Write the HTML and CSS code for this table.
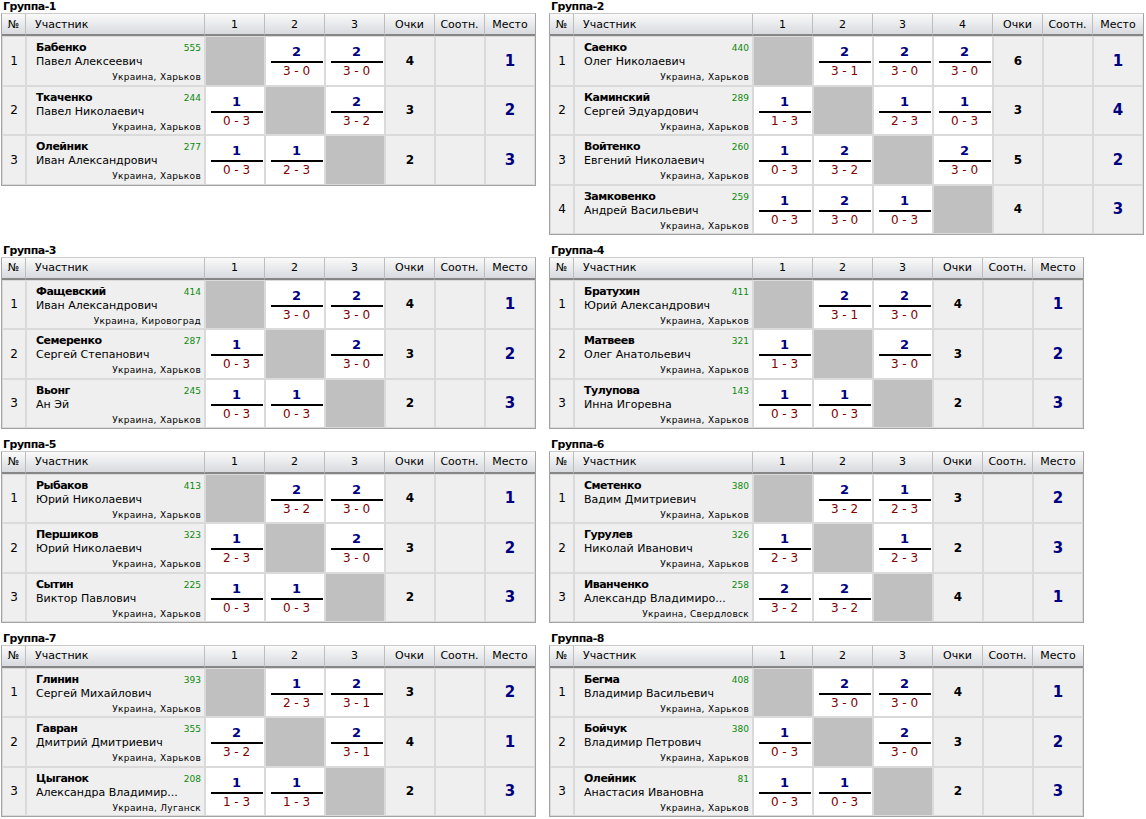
FILE: index.html
```html
<!DOCTYPE html>
<html lang="ru">
<head>
<meta charset="utf-8">
<title>Группы</title>
<link rel="stylesheet" href="styles.css">
</head>
<body>
<div class="page">

<section class="grp">
<div class="title">Группа-1</div>
<table class="t3">
<colgroup><col class="cn"><col class="cp"><col class="cs"><col class="cs"><col class="cs"><col class="co"><col class="co"><col class="co"></colgroup>
<thead><tr><th>№</th><th class="hp">Участник</th><th>1</th><th>2</th><th>3</th><th>Очки</th><th>Соотн.</th><th>Место</th></tr></thead>
<tbody>
<tr><td class="num">1</td><td class="pl"><div class="l1"><b>Бабенко</b><i>555</i></div><div class="fn">Павел Алексеевич</div><div class="loc">Украина, Харьков</div></td><td class="x"></td><td class="sc"><div class="r"><b>2</b><span>3 - 0</span></div></td><td class="sc"><div class="r"><b>2</b><span>3 - 0</span></div></td><td class="pts">4</td><td></td><td class="pos">1</td></tr>
<tr><td class="num">2</td><td class="pl"><div class="l1"><b>Ткаченко</b><i>244</i></div><div class="fn">Павел Николаевич</div><div class="loc">Украина, Харьков</div></td><td class="sc"><div class="r"><b>1</b><span>0 - 3</span></div></td><td class="x"></td><td class="sc"><div class="r"><b>2</b><span>3 - 2</span></div></td><td class="pts">3</td><td></td><td class="pos">2</td></tr>
<tr><td class="num">3</td><td class="pl"><div class="l1"><b>Олейник</b><i>277</i></div><div class="fn">Иван Александрович</div><div class="loc">Украина, Харьков</div></td><td class="sc"><div class="r"><b>1</b><span>0 - 3</span></div></td><td class="sc"><div class="r"><b>1</b><span>2 - 3</span></div></td><td class="x"></td><td class="pts">2</td><td></td><td class="pos">3</td></tr>
</tbody>
</table>
</section>

<section class="grp">
<div class="title">Группа-2</div>
<table class="t4">
<colgroup><col class="cn"><col class="cp"><col class="cs"><col class="cs"><col class="cs"><col class="cs"><col class="co"><col class="co"><col class="co"></colgroup>
<thead><tr><th>№</th><th class="hp">Участник</th><th>1</th><th>2</th><th>3</th><th>4</th><th>Очки</th><th>Соотн.</th><th>Место</th></tr></thead>
<tbody>
<tr><td class="num">1</td><td class="pl"><div class="l1"><b>Саенко</b><i>440</i></div><div class="fn">Олег Николаевич</div><div class="loc">Украина, Харьков</div></td><td class="x"></td><td class="sc"><div class="r"><b>2</b><span>3 - 1</span></div></td><td class="sc"><div class="r"><b>2</b><span>3 - 0</span></div></td><td class="sc"><div class="r"><b>2</b><span>3 - 0</span></div></td><td class="pts">6</td><td></td><td class="pos">1</td></tr>
<tr><td class="num">2</td><td class="pl"><div class="l1"><b>Каминский</b><i>289</i></div><div class="fn">Сергей Эдуардович</div><div class="loc">Украина, Харьков</div></td><td class="sc"><div class="r"><b>1</b><span>1 - 3</span></div></td><td class="x"></td><td class="sc"><div class="r"><b>1</b><span>2 - 3</span></div></td><td class="sc"><div class="r"><b>1</b><span>0 - 3</span></div></td><td class="pts">3</td><td></td><td class="pos">4</td></tr>
<tr><td class="num">3</td><td class="pl"><div class="l1"><b>Войтенко</b><i>260</i></div><div class="fn">Евгений Николаевич</div><div class="loc">Украина, Харьков</div></td><td class="sc"><div class="r"><b>1</b><span>0 - 3</span></div></td><td class="sc"><div class="r"><b>2</b><span>3 - 2</span></div></td><td class="x"></td><td class="sc"><div class="r"><b>2</b><span>3 - 0</span></div></td><td class="pts">5</td><td></td><td class="pos">2</td></tr>
<tr><td class="num">4</td><td class="pl"><div class="l1"><b>Замковенко</b><i>259</i></div><div class="fn">Андрей Васильевич</div><div class="loc">Украина, Харьков</div></td><td class="sc"><div class="r"><b>1</b><span>0 - 3</span></div></td><td class="sc"><div class="r"><b>2</b><span>3 - 0</span></div></td><td class="sc"><div class="r"><b>1</b><span>0 - 3</span></div></td><td class="x"></td><td class="pts">4</td><td></td><td class="pos">3</td></tr>
</tbody>
</table>
</section>

<section class="grp">
<div class="title">Группа-3</div>
<table class="t3">
<colgroup><col class="cn"><col class="cp"><col class="cs"><col class="cs"><col class="cs"><col class="co"><col class="co"><col class="co"></colgroup>
<thead><tr><th>№</th><th class="hp">Участник</th><th>1</th><th>2</th><th>3</th><th>Очки</th><th>Соотн.</th><th>Место</th></tr></thead>
<tbody>
<tr><td class="num">1</td><td class="pl"><div class="l1"><b>Фащевский</b><i>414</i></div><div class="fn">Иван Александрович</div><div class="loc">Украина, Кировоград</div></td><td class="x"></td><td class="sc"><div class="r"><b>2</b><span>3 - 0</span></div></td><td class="sc"><div class="r"><b>2</b><span>3 - 0</span></div></td><td class="pts">4</td><td></td><td class="pos">1</td></tr>
<tr><td class="num">2</td><td class="pl"><div class="l1"><b>Семеренко</b><i>287</i></div><div class="fn">Сергей Степанович</div><div class="loc">Украина, Харьков</div></td><td class="sc"><div class="r"><b>1</b><span>0 - 3</span></div></td><td class="x"></td><td class="sc"><div class="r"><b>2</b><span>3 - 0</span></div></td><td class="pts">3</td><td></td><td class="pos">2</td></tr>
<tr><td class="num">3</td><td class="pl"><div class="l1"><b>Вьонг</b><i>245</i></div><div class="fn">Ан Эй</div><div class="loc">Украина, Харьков</div></td><td class="sc"><div class="r"><b>1</b><span>0 - 3</span></div></td><td class="sc"><div class="r"><b>1</b><span>0 - 3</span></div></td><td class="x"></td><td class="pts">2</td><td></td><td class="pos">3</td></tr>
</tbody>
</table>
</section>

<section class="grp">
<div class="title">Группа-4</div>
<table class="t3">
<colgroup><col class="cn"><col class="cp"><col class="cs"><col class="cs"><col class="cs"><col class="co"><col class="co"><col class="co"></colgroup>
<thead><tr><th>№</th><th class="hp">Участник</th><th>1</th><th>2</th><th>3</th><th>Очки</th><th>Соотн.</th><th>Место</th></tr></thead>
<tbody>
<tr><td class="num">1</td><td class="pl"><div class="l1"><b>Братухин</b><i>411</i></div><div class="fn">Юрий Александрович</div><div class="loc">Украина, Харьков</div></td><td class="x"></td><td class="sc"><div class="r"><b>2</b><span>3 - 1</span></div></td><td class="sc"><div class="r"><b>2</b><span>3 - 0</span></div></td><td class="pts">4</td><td></td><td class="pos">1</td></tr>
<tr><td class="num">2</td><td class="pl"><div class="l1"><b>Матвеев</b><i>321</i></div><div class="fn">Олег Анатольевич</div><div class="loc">Украина, Харьков</div></td><td class="sc"><div class="r"><b>1</b><span>1 - 3</span></div></td><td class="x"></td><td class="sc"><div class="r"><b>2</b><span>3 - 0</span></div></td><td class="pts">3</td><td></td><td class="pos">2</td></tr>
<tr><td class="num">3</td><td class="pl"><div class="l1"><b>Тулупова</b><i>143</i></div><div class="fn">Инна Игоревна</div><div class="loc">Украина, Харьков</div></td><td class="sc"><div class="r"><b>1</b><span>0 - 3</span></div></td><td class="sc"><div class="r"><b>1</b><span>0 - 3</span></div></td><td class="x"></td><td class="pts">2</td><td></td><td class="pos">3</td></tr>
</tbody>
</table>
</section>

<section class="grp">
<div class="title">Группа-5</div>
<table class="t3">
<colgroup><col class="cn"><col class="cp"><col class="cs"><col class="cs"><col class="cs"><col class="co"><col class="co"><col class="co"></colgroup>
<thead><tr><th>№</th><th class="hp">Участник</th><th>1</th><th>2</th><th>3</th><th>Очки</th><th>Соотн.</th><th>Место</th></tr></thead>
<tbody>
<tr><td class="num">1</td><td class="pl"><div class="l1"><b>Рыбаков</b><i>413</i></div><div class="fn">Юрий Николаевич</div><div class="loc">Украина, Харьков</div></td><td class="x"></td><td class="sc"><div class="r"><b>2</b><span>3 - 2</span></div></td><td class="sc"><div class="r"><b>2</b><span>3 - 0</span></div></td><td class="pts">4</td><td></td><td class="pos">1</td></tr>
<tr><td class="num">2</td><td class="pl"><div class="l1"><b>Першиков</b><i>323</i></div><div class="fn">Юрий Николаевич</div><div class="loc">Украина, Харьков</div></td><td class="sc"><div class="r"><b>1</b><span>2 - 3</span></div></td><td class="x"></td><td class="sc"><div class="r"><b>2</b><span>3 - 0</span></div></td><td class="pts">3</td><td></td><td class="pos">2</td></tr>
<tr><td class="num">3</td><td class="pl"><div class="l1"><b>Сытин</b><i>225</i></div><div class="fn">Виктор Павлович</div><div class="loc">Украина, Харьков</div></td><td class="sc"><div class="r"><b>1</b><span>0 - 3</span></div></td><td class="sc"><div class="r"><b>1</b><span>0 - 3</span></div></td><td class="x"></td><td class="pts">2</td><td></td><td class="pos">3</td></tr>
</tbody>
</table>
</section>

<section class="grp">
<div class="title">Группа-6</div>
<table class="t3">
<colgroup><col class="cn"><col class="cp"><col class="cs"><col class="cs"><col class="cs"><col class="co"><col class="co"><col class="co"></colgroup>
<thead><tr><th>№</th><th class="hp">Участник</th><th>1</th><th>2</th><th>3</th><th>Очки</th><th>Соотн.</th><th>Место</th></tr></thead>
<tbody>
<tr><td class="num">1</td><td class="pl"><div class="l1"><b>Сметенко</b><i>380</i></div><div class="fn">Вадим Дмитриевич</div><div class="loc">Украина, Харьков</div></td><td class="x"></td><td class="sc"><div class="r"><b>2</b><span>3 - 2</span></div></td><td class="sc"><div class="r"><b>1</b><span>2 - 3</span></div></td><td class="pts">3</td><td></td><td class="pos">2</td></tr>
<tr><td class="num">2</td><td class="pl"><div class="l1"><b>Гурулев</b><i>326</i></div><div class="fn">Николай Иванович</div><div class="loc">Украина, Харьков</div></td><td class="sc"><div class="r"><b>1</b><span>2 - 3</span></div></td><td class="x"></td><td class="sc"><div class="r"><b>1</b><span>2 - 3</span></div></td><td class="pts">2</td><td></td><td class="pos">3</td></tr>
<tr><td class="num">3</td><td class="pl"><div class="l1"><b>Иванченко</b><i>258</i></div><div class="fn">Александр Владимиро...</div><div class="loc">Украина, Свердловск</div></td><td class="sc"><div class="r"><b>2</b><span>3 - 2</span></div></td><td class="sc"><div class="r"><b>2</b><span>3 - 2</span></div></td><td class="x"></td><td class="pts">4</td><td></td><td class="pos">1</td></tr>
</tbody>
</table>
</section>

<section class="grp">
<div class="title">Группа-7</div>
<table class="t3">
<colgroup><col class="cn"><col class="cp"><col class="cs"><col class="cs"><col class="cs"><col class="co"><col class="co"><col class="co"></colgroup>
<thead><tr><th>№</th><th class="hp">Участник</th><th>1</th><th>2</th><th>3</th><th>Очки</th><th>Соотн.</th><th>Место</th></tr></thead>
<tbody>
<tr><td class="num">1</td><td class="pl"><div class="l1"><b>Глинин</b><i>393</i></div><div class="fn">Сергей Михайлович</div><div class="loc">Украина, Харьков</div></td><td class="x"></td><td class="sc"><div class="r"><b>1</b><span>2 - 3</span></div></td><td class="sc"><div class="r"><b>2</b><span>3 - 1</span></div></td><td class="pts">3</td><td></td><td class="pos">2</td></tr>
<tr><td class="num">2</td><td class="pl"><div class="l1"><b>Гавран</b><i>355</i></div><div class="fn">Дмитрий Дмитриевич</div><div class="loc">Украина, Харьков</div></td><td class="sc"><div class="r"><b>2</b><span>3 - 2</span></div></td><td class="x"></td><td class="sc"><div class="r"><b>2</b><span>3 - 1</span></div></td><td class="pts">4</td><td></td><td class="pos">1</td></tr>
<tr><td class="num">3</td><td class="pl"><div class="l1"><b>Цыганок</b><i>208</i></div><div class="fn">Александра Владимир...</div><div class="loc">Украина, Луганск</div></td><td class="sc"><div class="r"><b>1</b><span>1 - 3</span></div></td><td class="sc"><div class="r"><b>1</b><span>1 - 3</span></div></td><td class="x"></td><td class="pts">2</td><td></td><td class="pos">3</td></tr>
</tbody>
</table>
</section>

<section class="grp">
<div class="title">Группа-8</div>
<table class="t3">
<colgroup><col class="cn"><col class="cp"><col class="cs"><col class="cs"><col class="cs"><col class="co"><col class="co"><col class="co"></colgroup>
<thead><tr><th>№</th><th class="hp">Участник</th><th>1</th><th>2</th><th>3</th><th>Очки</th><th>Соотн.</th><th>Место</th></tr></thead>
<tbody>
<tr><td class="num">1</td><td class="pl"><div class="l1"><b>Бегма</b><i>408</i></div><div class="fn">Владимир Васильевич</div><div class="loc">Украина, Харьков</div></td><td class="x"></td><td class="sc"><div class="r"><b>2</b><span>3 - 0</span></div></td><td class="sc"><div class="r"><b>2</b><span>3 - 0</span></div></td><td class="pts">4</td><td></td><td class="pos">1</td></tr>
<tr><td class="num">2</td><td class="pl"><div class="l1"><b>Бойчук</b><i>380</i></div><div class="fn">Владимир Петрович</div><div class="loc">Украина, Харьков</div></td><td class="sc"><div class="r"><b>1</b><span>0 - 3</span></div></td><td class="x"></td><td class="sc"><div class="r"><b>2</b><span>3 - 0</span></div></td><td class="pts">3</td><td></td><td class="pos">2</td></tr>
<tr><td class="num">3</td><td class="pl"><div class="l1"><b>Олейник</b><i>81</i></div><div class="fn">Анастасия Ивановна</div><div class="loc">Украина, Харьков</div></td><td class="sc"><div class="r"><b>1</b><span>0 - 3</span></div></td><td class="sc"><div class="r"><b>1</b><span>0 - 3</span></div></td><td class="x"></td><td class="pts">2</td><td></td><td class="pos">3</td></tr>
</tbody>
</table>
</section>

</div>
</body>
</html>
```
FILE: styles.css
```css
* { box-sizing: border-box; }
body {
  margin: 0;
  font-family: "DejaVu Sans", Verdana, sans-serif;
  font-size: 11px;
  color: #000;
  background: #fff;
}
.page {
  display: grid;
  grid-template-columns: 535px 595px;
  column-gap: 13px;
  row-gap: 8.5px;
  padding-left: 1px;
  align-items: start;
}
.title {
  height: 13px;
  line-height: 13px;
  font-weight: bold;
  font-size: 11px;
  letter-spacing: -0.5px;
  padding-left: 2px;
}
table {
  border-collapse: separate;
  border-spacing: 0;
  table-layout: fixed;
  border: 1px solid #a2a2a2;
  border-top-color: #cacaca;
}
.t3 { width: 535px; }
.t4 { width: 595px; }
col.cn { width: 24px; }
col.cp { width: 179px; }
col.cs { width: 60px; }
col.co { width: 50px; }

th {
  height: 22px;
  padding: 0;
  font-weight: normal;
  font-size: 11px;
  text-align: center;
  background: linear-gradient(#fafafa, #d8dadf);
  border-right: 1px solid #bdbdbd;
  border-bottom: 2px solid #868686;
  white-space: nowrap;
}
th:last-child { border-right: 0; }
th.hp { text-align: left; padding-left: 9px; }

td {
  height: 49.5px;
  padding: 0;
  border: 1px solid #dadada;
  background: #efefef;
  text-align: center;
  vertical-align: middle;
}
td.num { font-size: 12px; }
td.pl {
  vertical-align: top;
  text-align: left;
  padding: 4px 3px 0 9px;
}
.l1 {
  display: flex;
  justify-content: space-between;
  align-items: baseline;
  line-height: 14px;
}
.l1 b { font-weight: bold; font-size: 11px; letter-spacing: -0.5px; }
.l1 i { font-style: normal; font-size: 9px; color: #0a8a0a; }
.fn { line-height: 14px; white-space: nowrap; }
.loc {
  margin-top: 3px;
  line-height: 11px;
  font-size: 9px;
  letter-spacing: 0.3px;
  text-align: right;
  white-space: nowrap;
}
td.x { background: #c0c0c0; }
td.sc {
  background: #fff;
  vertical-align: top;
  padding: 7px 1px 0 4px;
}
.r { width: 52px; margin: 0 auto; }
.r b {
  display: block;
  font-size: 13px;
  line-height: 15px;
  font-weight: bold;
  color: #00007f;
  padding-bottom: 2px;
  border-bottom: 2px solid #000;
}
.r span {
  display: block;
  margin-top: 1px;
  font-size: 12px;
  line-height: 14px;
  color: #800000;
}
td.pts { font-size: 12px; font-weight: bold; }
td.pos { font-size: 15px; font-weight: bold; color: #00007f; }
```
